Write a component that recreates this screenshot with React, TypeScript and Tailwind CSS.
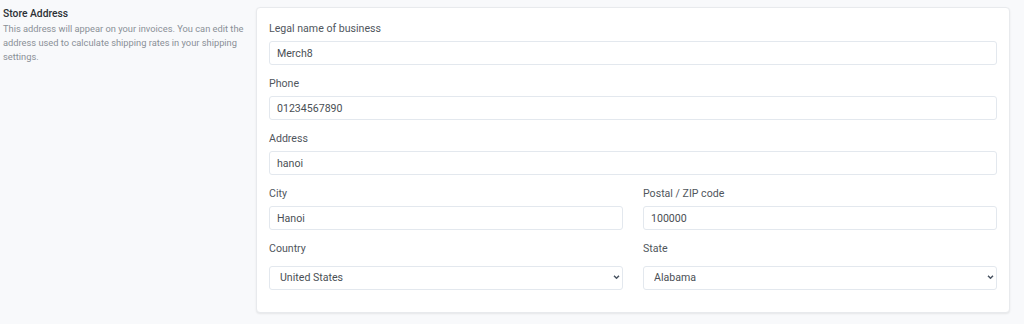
import React from 'react';

const inputCls =
  'w-full h-[24px] rounded-[3px] border border-[#e3e8ee] bg-white px-[7px] text-[10.6px] text-[#4a4f55] outline-none';

function Field({ label, value, select }: { label: string; value: string; select?: boolean }) {
  return (
    <div className="flex flex-col">
      <label className="text-[10.6px] leading-[16px] text-[#50565d] mb-[4px]">{label}</label>
      {select ? (
        <div className="relative mt-[3px]">
          <select
            className={`${inputCls} appearance-none pl-[10px]`}
            defaultValue={value}
          >
            <option>{value}</option>
          </select>
          <svg
            className="absolute right-[3px] top-1/2 -translate-y-1/2 pointer-events-none"
            width="7"
            height="5"
            viewBox="0 0 7 5"
            fill="none"
          >
            <path d="M1 1.2L3.5 3.7L6 1.2" stroke="#4b5563" strokeWidth="1.5" />
          </svg>
        </div>
      ) : (
        <input className={inputCls} defaultValue={value} />
      )}
    </div>
  );
}

export default function App() {
  return (
    <div
      className="w-[1024px] h-[324px] bg-[#f8f9fb] flex pt-[7px] pl-[3px]"
      style={{ fontFamily: 'Roboto, "Liberation Sans", sans-serif' }}
    >
      {/* Left description */}
      <div className="w-[253px] pr-[10px]">
        <h3 className="text-[10.3px] leading-[14px] font-medium text-[#2d3136]">Store Address</h3>
        <p className="text-[9.3px] leading-[14px] text-[#8a9097] mt-[1px]">
          This address will appear on your invoices. You can edit the address used to calculate
          shipping rates in your shipping settings.
        </p>
      </div>

      {/* Card */}
      <div className="w-[754px] h-[306px] bg-white border border-[#e8eaed] rounded-[4px] shadow-[0_1px_2px_rgba(0,0,0,0.08)] px-[12px] pt-[13px]">
        <div className="flex flex-col gap-[11px]">
          <Field label="Legal name of business" value="Merch8" />
          <Field label="Phone" value="01234567890" />
          <Field label="Address" value="hanoi" />
          <div className="grid grid-cols-2 gap-x-[20px] gap-y-[11px]">
            <Field label="City" value="Hanoi" />
            <Field label="Postal / ZIP code" value="100000" />
            <Field label="Country" value="United States" select />
            <Field label="State" value="Alabama" select />
          </div>
        </div>
      </div>
    </div>
  );
}
